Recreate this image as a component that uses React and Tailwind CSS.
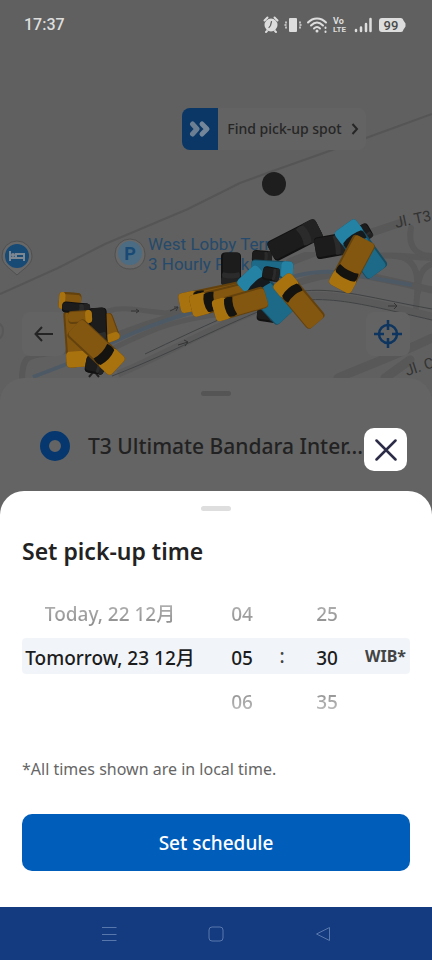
import React, { useState } from 'react';

const CAR_COLORS = {
  yellow: { body: '#845710', hood: '#a8730f', side: '#64420d', glass: '#15130f' },
  cyan: { body: '#1c6a88', hood: '#2482a4', side: '#174d62', glass: '#151a1c' },
  black: { body: '#1c1c1c', hood: '#222222', side: '#121212', glass: '#2b2b2b' },
};

// Drawn in order, later cars lie on top
const CARS = [
  // left cluster
  { x: 108, y: 328, angle: 70, len: 28, width: 17, color: 'yellow', plain: true },
  { x: 76, y: 339, angle: 86, len: 56, width: 22, color: 'yellow', plain: true },
  { x: 70, y: 301, angle: 184, len: 22, width: 17, color: 'yellow', plain: true },
  { x: 76, y: 308, angle: 6, len: 28, width: 11, color: 'black' },
  { x: 98, y: 328, angle: 88, len: 40, width: 18, color: 'black' },
  { x: 80, y: 317, angle: -4, len: 24, width: 13, color: 'yellow', plain: true },
  { x: 95, y: 365, angle: 10, len: 19, width: 17, color: 'black' },
  { x: 96, y: 347, angle: 43, len: 60, width: 24, color: 'yellow' },
  // middle cluster
  { x: 231, y: 269, angle: 90, len: 33, width: 20, color: 'black' },
  { x: 262, y: 257, angle: 4, len: 20, width: 13, color: 'black' },
  { x: 295, y: 240, angle: -27, len: 54, width: 22, color: 'black' },
  { x: 272, y: 269, angle: 3, len: 42, width: 17, color: 'cyan', plain: true },
  { x: 268, y: 315, angle: 8, len: 22, width: 14, color: 'black' },
  { x: 212, y: 297, angle: 168, len: 66, width: 20, color: 'yellow' },
  { x: 222, y: 299, angle: 166, len: 64, width: 22, color: 'yellow' },
  { x: 266, y: 295, angle: 227, len: 60, width: 27, color: 'cyan' },
  { x: 271, y: 274, angle: 10, len: 17, width: 14, color: 'black' },
  { x: 240, y: 304, angle: 164, len: 54, width: 22, color: 'yellow' },
  { x: 299, y: 301, angle: 230, len: 57, width: 23, color: 'yellow' },
  // right cluster
  { x: 331, y: 246, angle: -10, len: 32, width: 22, color: 'black' },
  { x: 365, y: 232, angle: 60, len: 16, width: 12, color: 'black' },
  { x: 361, y: 249, angle: 234, len: 58, width: 26, color: 'cyan' },
  { x: 352, y: 264, angle: 118, len: 56, width: 25, color: 'yellow' },
];

function Car({ x, y, angle, len, width, color, plain }) {
  const c = CAR_COLORS[color];
  const right = len / 2;
  const top = -width / 2;
  return (
    <g transform={`translate(${x} ${y}) rotate(${angle})`}>
      <rect x={-right} y={top} width={len} height={width} rx="4" fill={c.side} />
      <rect x={-right} y={top + 1} width={len} height={width - 3} rx="4" fill={c.body} />
      <rect x={right - len * 0.28} y={top} width={len * 0.28} height={width} rx="4" fill={c.hood} />
      {!plain && (
        <path
          d={`M${right - len * 0.4} ${top + 2} Q${right - len * 0.3} ${top} ${right - len * 0.24} ${top + 2} Q${right - len * 0.18} 0 ${right - len * 0.24} ${-top - 2} Q${right - len * 0.3} ${-top} ${right - len * 0.4} ${-top - 2} Q${right - len * 0.34} 0 ${right - len * 0.4} ${top + 2}Z`}
          fill={c.glass}
        />
      )}
    </g>
  );
}

function MapCanvas() {
  return (
    <svg
      viewBox="0 0 432 402"
      preserveAspectRatio="xMidYMid slice"
      className="absolute inset-0 h-full w-full"
      fill="none"
      aria-hidden="true"
    >
      <rect width="432" height="402" fill="#606060" />

      {/* Terminal outline */}
      <path d="M0 294L58 268L105 244L188 209L240 183L270 172L366 138L432 114" stroke="#555555" strokeWidth="2" />

      {/* Service roads */}
      <g stroke="#585858" strokeLinecap="round">
        <path d="M108 311C125 306 140 311 165 313C185 311 195 300 225 290" strokeWidth="5" />
        <path d="M22 380C22 352 30 356 60 352C110 342 140 322 180 315" strokeWidth="6" />
        <path d="M110 350C150 330 175 318 240 312" strokeWidth="5" />
        <path d="M290 262C330 246 350 240 400 223" strokeWidth="8" />
        <path d="M370 256C395 254 410 257 432 258" strokeWidth="6" />
        <path d="M411 228C407 250 420 256 432 256M395 256C420 258 419 280 416 308M432 264C420 268 418 280 418 292" strokeWidth="6" />
        <path d="M338 378C360 368 385 360 432 338M385 378L410 360" strokeWidth="9" />
        <path d="M292 285C340 266 360 274 432 290" strokeWidth="7" />
        <path d="M0 324C4 327 4 335 0 338" strokeWidth="2" />
      </g>
      <path d="M33 377L72 362C120 338 150 324 200 310C270 286 300 266 345 273L412 285" stroke="#4d5a65" strokeWidth="4" />
      <path d="M118 374C180 348 230 316 300 296C340 292 385 306 432 316" stroke="#5a5a5a" strokeWidth="7" />
      <g stroke="#404244">
        <path d="M112 376C180 350 235 318 285 302C330 296 350 301 432 320" />
        <path d="M145 354C200 328 250 304 290 293C330 285 360 296 432 309" />
      </g>
      <g stroke="#343434" strokeWidth="1">
        <path d="M131 311H139M136 309L139 311L136 313M178 345L188 342M184 340L188 342L185 346M388 306H397M394 303L397 306L394 309M170 311L178 307M174 307L178 307L176 311" />
      </g>

      {/* Hotel pin */}
      <path d="M17 275C8 267 2 264 2 256A15 15 0 0 1 32 256C32 264 26 267 17 275Z" fill="#686868" stroke="#505050" />
      <circle cx="17" cy="256" r="12" fill="#174a75" />
      <path d="M10 251V261M10 258H24V261M24 258V254H16V258" stroke="#7c8791" strokeWidth="2" />
      <circle cx="13" cy="255" r="2" fill="#7c8791" />

      {/* Parking pin */}
      <path d="M130 269C120 269 115 262 115 254A15 15 0 0 1 145 254C145 262 140 269 130 269Z" fill="#686868" stroke="#505050" />
      <circle cx="130" cy="253" r="12" fill="#4c6c83" />
      <text x="130" y="260" textAnchor="middle" fontSize="18" fontWeight="700" className="fill-[#194a75] font-['Roboto',sans-serif]">P</text>

      <g fontSize="17" className="fill-[#254a6b] font-['Roboto',sans-serif]">
        <text x="148" y="250">West Lobby Terminal</text>
        <text x="148" y="270">3 Hourly Park</text>
      </g>
      {/* Terminal building hides the end of the label */}
      <rect x="283" y="232" width="40" height="20" fill="#606060" />
      <g fontSize="15" className="fill-[#333333] font-['Roboto',sans-serif]">
        <text transform="translate(396 228) rotate(-12)">Jl. T3</text>
        <text transform="translate(407 376) rotate(-18)">Jl. C</text>
      </g>

      {CARS.map((car, idx) => (
        <Car key={idx} {...car} />
      ))}
      <path d="M89 377L94 371L99 377" stroke="#222222" strokeWidth="2" />
      <circle cx="274" cy="184" r="12" fill="#1e1e1e" />
    </svg>
  );
}

function StatusBar() {
  return (
    <div className="relative flex h-[50px] items-center justify-between pl-6 pr-[26px] font-['Roboto',sans-serif] text-[#dddddd]">
      <span className="text-base font-medium">17:37</span>
      <svg width="143" height="20" viewBox="0 0 143 20" fill="none" stroke="#dddddd" strokeLinecap="round" aria-label="Alarm, vibrate, Wi-Fi, VoLTE, signal, battery 99 percent">
        {/* alarm */}
        <circle cx="8" cy="10" r="6.500" fill="#dddddd" stroke="none" />
        <path d="M1.500 5.500L4.500 2.500M14.500 5.500L11.500 2.500M4 16L3 17M12 16L13 17" strokeWidth="2" />
        <path d="M8.500 6.500L7.500 10.500L6 12.500" stroke="#606060" strokeWidth="1.200" />
        {/* vibrate */}
        <rect x="26" y="3" width="8" height="14" rx="1" fill="#dddddd" stroke="none" />
        <path d="M23 7V8M22 10H23M23 12V13M37 7V8M37 10H38M37 12V13" strokeWidth="1.500" />
        {/* wifi */}
        <path d="M45 7.500C50 2 58 2 63 7.500M48 10.500C52 6.500 56 6.500 60 10.500M51 13.500C53 11.500 55 11.500 57 13.500" strokeWidth="2" />
        <circle cx="54" cy="16" r="1.500" fill="#dddddd" stroke="none" />
        <path d="M62.500 12.500V13M62.500 16.500V17" strokeWidth="2" />
        <g fill="#dddddd" stroke="none" fontWeight="700" fontSize="9" className="font-['Roboto',sans-serif]">
          <text x="70" y="9">Vo</text>
          <text x="70" y="17" fontSize="8">LTE</text>
        </g>
        {/* signal */}
        <path d="M93 15V16M98 12.500V16M103 9V16M107.500 4V16" strokeWidth="2.500" />
        {/* battery */}
        <path d="M119 3H138Q140 3 140.500 5.500L142.500 8.500V11.500L140.500 14.500Q140 17 138 17H119Q116 17 116 14V6Q116 3 119 3Z" fill="#dddddd" stroke="none" />
        <text x="128" y="15" textAnchor="middle" fill="#4a4a4a" stroke="none" fontWeight="500" fontSize="13">99</text>
      </svg>
    </div>
  );
}

function MapSection() {
  return (
    <section className="relative flex min-h-[402px] flex-1 flex-col overflow-hidden">
      <MapCanvas />
      <StatusBar />

      <button
        type="button"
        className="absolute top-[108px] left-[calc(50%-34px)] flex h-[42px] w-[184px] items-center overflow-hidden rounded-lg bg-[#636363] text-sm font-medium text-[#262626]"
      >
        <span className="flex h-full w-9 items-center justify-center bg-[#0a3766]">
          <svg width="22" height="18" viewBox="0 0 22 18" fill="none" stroke="#6c7f92" strokeWidth="5" strokeLinecap="round" strokeLinejoin="round">
            <path d="M3.500 4L8 9L3.500 14" />
            <path d="M13 4L18 9L13 14" stroke="#74869a" />
          </svg>
        </span>
        <span className="flex-1 text-center whitespace-nowrap">Find pick-up spot</span>
        <svg width="8" height="12" viewBox="0 0 8 12" fill="none" stroke="#262626" strokeWidth="2" className="mr-[7px]">
          <path d="M1.500 1L6 6L1.500 11" />
        </svg>
      </button>

      <div className="relative mt-auto flex justify-between px-[22px] pb-[46px]">
        <button type="button" aria-label="Back" className="flex size-11 items-center justify-center rounded-lg bg-[#636363]">
          <svg width="20" height="16" viewBox="0 0 20 16" fill="none" stroke="#242424" strokeWidth="2">
            <path d="M19 8H2M8 1L1.500 8L8 15" />
          </svg>
        </button>
        <button type="button" aria-label="My location" className="flex size-11 items-center justify-center rounded-lg bg-[#636363]">
          <svg width="28" height="28" viewBox="0 0 28 28" fill="none" stroke="#0d355f" strokeWidth="2.500">
            <circle cx="14" cy="14" r="9" />
            <path d="M14 0V10M14 18V28M0 14H10M18 14H28" />
          </svg>
        </button>
      </div>
      {/* keeps the left cluster above the back button */}
      <svg viewBox="0 0 432 402" preserveAspectRatio="xMidYMid slice" className="pointer-events-none absolute inset-0 h-full w-full" aria-hidden="true">
        {CARS.slice(0, 8).map((car, idx) => (
          <Car key={idx} {...car} />
        ))}
      </svg>
    </section>
  );
}

function LocationSheet({ onClose }) {
  return (
    <section className="relative -mt-6 rounded-t-3xl bg-[#646464] px-[22px] pt-[13px] pb-[29px]">
      <div className="mx-auto h-[5px] w-[30px] rounded-full bg-[#555555]" />
      <div className="mt-[34px] flex h-8 items-center gap-[18px] pl-[18px]">
        <span className="size-[30px] shrink-0 rounded-full border-[9px] border-[#06386f]" />
        <span className="pt-0.5 text-[21px] font-medium whitespace-nowrap text-[#222222]">T3 Ultimate Bandara Inter...</span>
      </div>
      <button
        type="button"
        aria-label="Close"
        onClick={onClose}
        className="absolute top-[50px] right-[25px] flex size-[43px] items-center justify-center rounded-[10px] bg-white"
      >
        <svg width="22" height="22" viewBox="0 0 22 22" fill="none" stroke="#2c2c48" strokeWidth="2.500" strokeLinecap="round">
          <path d="M1.500 1.500L20.500 20.500M20.500 1.500L1.500 20.500" />
        </svg>
      </button>
    </section>
  );
}

const ROWS = [
  { date: 'Today, 22 12月', hour: '04', minute: '25', tone: 'bg-linear-to-b from-[#b8b8b8] to-[#888888] bg-clip-text text-transparent' },
  { date: 'Tomorrow, 23 12月', hour: '05', minute: '30', tone: 'text-[#1c1c1c]', selected: true },
  { date: '', hour: '06', minute: '35', tone: 'bg-linear-to-b from-[#888888] to-[#c8c8c8] bg-clip-text text-transparent' },
];

function TimePicker() {
  return (
    <div className="mt-[27px] flex flex-col gap-2 text-[19px] font-medium">
      {ROWS.map((row) => (
        <div key={row.hour} className={`flex h-9 items-center rounded ${row.selected ? 'bg-[#f1f5fa]' : ''}`}>
          <div className="flex-1 pt-1 text-center whitespace-nowrap">
            {row.date && <button type="button" className={row.tone}>{row.date}</button>}
          </div>
          <div className="ml-5 w-12 pt-1 text-center">
            <button type="button" className={row.tone}>{row.hour}</button>
          </div>
          <span className="w-8 text-center text-[#444444]">{row.selected ? ':' : ''}</span>
          <div className="w-[58px] pt-1 text-center">
            <button type="button" className={row.tone}>{row.minute}</button>
          </div>
          <span className="w-[54px] pr-1 text-right text-base font-bold text-[#444444]">{row.selected ? 'WIB*' : ''}</span>
        </div>
      ))}
    </div>
  );
}

function ScheduleSheet() {
  return (
    <section className="bg-[#646464]">
      <div className="rounded-t-3xl bg-white px-[22px] pt-[15px] pb-9">
        <div className="mx-auto h-[5px] w-[30px] rounded-full bg-[#dedede]" />
        <h1 className="mt-6 text-[23px] leading-8 font-semibold text-[#222222]">Set pick-up time</h1>
        <TimePicker />
        <p className="mt-[39px] text-base leading-6 text-[#666666]">*All times shown are in local time.</p>
        <button type="button" className="mt-[33px] h-[57px] w-full rounded-[10px] bg-[#005dba] pt-0.5 text-[19px] font-medium text-white">
          Set schedule
        </button>
      </div>
    </section>
  );
}

function SystemNav() {
  return (
    <nav className="flex h-[53px] items-center justify-center gap-[91px] bg-[#143a80]">
      <button type="button" aria-label="Recent apps">
        <svg width="16" height="16" viewBox="0 0 16 16" fill="none" stroke="#5878ad">
          <path d="M1 1.500H15.500M1 8.500H15.500M1 14.500H15.500" />
        </svg>
      </button>
      <button type="button" aria-label="Home">
        <svg width="16" height="16" viewBox="0 0 16 16" fill="none" stroke="#5878ad">
          <rect x="1" y="1" width="14" height="14" rx="3" />
        </svg>
      </button>
      <button type="button" aria-label="Back">
        <svg width="16" height="16" viewBox="0 0 16 16" fill="none" stroke="#5878ad" strokeLinejoin="round">
          <path d="M14.500 1.500V14.500L1.500 8Z" />
        </svg>
      </button>
    </nav>
  );
}

export default function App() {
  const [isOpen, setIsOpen] = useState(true);

  return (
    <main className="flex min-h-screen flex-col bg-[#646464] font-['Noto_Sans','Noto_Sans_CJK_JP',sans-serif]">
      <MapSection />
      <LocationSheet onClose={() => setIsOpen(false)} />
      {isOpen && <ScheduleSheet />}
      <SystemNav />
    </main>
  );
}
